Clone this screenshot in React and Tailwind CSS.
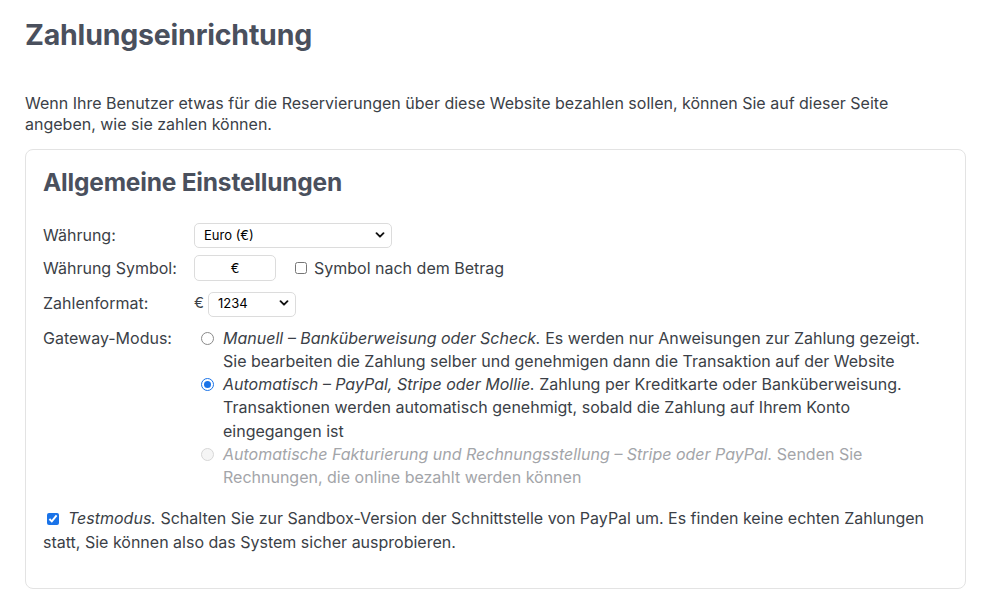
import React, { useState } from "react";

const Chevron = () => (
  <svg
    className="pointer-events-none absolute right-[7px] top-1/2 -translate-y-1/2"
    width="10"
    height="10"
    viewBox="0 0 10 10"
  >
    <path d="M1.5 3.2 L5 6.7 L8.5 3.2" fill="none" stroke="#111" strokeWidth="1.9" strokeLinecap="round" strokeLinejoin="round" />
  </svg>
);

const Radio = ({ checked, disabled }) => (
  <span
    className={
      "mt-[5px] flex h-[13px] w-[13px] shrink-0 items-center justify-center rounded-full border " +
      (checked
        ? "border-[#1a73e8] bg-white"
        : disabled
        ? "border-[#d7d7d7] bg-[#f5f5f5]"
        : "border-[#8a8a8a] bg-white")
    }
  >
    {checked && <span className="h-[7px] w-[7px] rounded-full bg-[#1a73e8]" />}
  </span>
);

const App = () => {
  const [currency, setCurrency] = useState("EUR");
  const [symbol, setSymbol] = useState("€");
  const [format, setFormat] = useState("1234");
  const [mode, setMode] = useState("auto");
  const [testMode, setTestMode] = useState(true);
  const [symbolAfter, setSymbolAfter] = useState(false);

  return (
    <div className="min-h-screen bg-white px-[25px] pt-[17px] font-['Inter','Liberation_Sans',sans-serif] text-[#3b3f47]">
      <h1 className="text-[28.5px] font-bold leading-[36px] tracking-[-0.2px] text-[#4a505d]">Zahlungseinrichtung</h1>

      <p className="mt-[40px] w-[910px] text-[16px] leading-[21px]">
        Wenn Ihre Benutzer etwas für die Reservierungen über diese Website bezahlen sollen, können Sie auf dieser Seite
        angeben, wie sie zahlen können.
      </p>

      <div className="mt-[14px] w-[941px] rounded-[8px] border border-[#e3e3e3] px-[17px] pb-[33px] pt-[16px]">
        <h2 className="text-[24.5px] font-bold leading-[32px] tracking-[-0.2px] text-[#4a505d]">Allgemeine Einstellungen</h2>

        <div className="mt-[24px] grid grid-cols-[151px_1fr] text-[16px]">
          <label className="self-center leading-[24px]">Währung:</label>
          <div className="relative w-[198px]">
            <select
              value={currency}
              onChange={(e) => setCurrency(e.target.value)}
              className="h-[25px] w-full appearance-none rounded-[5px] border border-[#dcdcdc] bg-white pl-[9px] text-[13px] text-black outline-none"
            >
              <option value="EUR">Euro (€)</option>
              <option value="USD">US-Dollar ($)</option>
              <option value="GBP">Pfund (£)</option>
            </select>
            <Chevron />
          </div>

          <label className="mt-[7px] self-center leading-[24px]">Währung Symbol:</label>
          <div className="mt-[7px] flex items-center">
            <input
              value={symbol}
              onChange={(e) => setSymbol(e.target.value)}
              className="h-[26px] w-[82px] rounded-[5px] border border-[#dcdcdc] text-center text-[13px] text-black outline-none"
            />
            <label className="ml-[19px] flex items-center gap-[7px]">
              <input
                type="checkbox"
                checked={symbolAfter}
                onChange={(e) => setSymbolAfter(e.target.checked)}
                className="h-[12px] w-[12px] accent-[#1a73e8]"
              />
              <span>Symbol nach dem Betrag</span>
            </label>
          </div>

          <label className="mt-[9px] self-center leading-[24px]">Zahlenformat:</label>
          <div className="mt-[9px] flex items-center gap-[4px]">
            <span className="text-[15px]">€</span>
            <div className="relative w-[88px]">
              <select
                value={format}
                onChange={(e) => setFormat(e.target.value)}
                className="h-[25px] w-full appearance-none rounded-[5px] border border-[#dcdcdc] bg-white pl-[9px] text-[13px] text-black outline-none"
              >
                <option value="1234">1234</option>
                <option value="1,234">1,234</option>
                <option value="1.234">1.234</option>
              </select>
              <Chevron />
            </div>
          </div>

          <span className="mt-[10px] leading-[23.3px]">Gateway-Modus:</span>
          <div className="mt-[10px] flex flex-col leading-[23.3px]">
            <div className="flex gap-[9px] pl-[7px]" onClick={() => setMode("manual")}>
              <Radio checked={mode === "manual"} />
              <span className="max-w-[712px]">
                <em>Manuell – Banküberweisung oder Scheck.</em> Es werden nur Anweisungen zur Zahlung gezeigt. Sie
                bearbeiten die Zahlung selber und genehmigen dann die Transaktion auf der Website
              </span>
            </div>
            <div className="flex gap-[9px] pl-[7px]" onClick={() => setMode("auto")}>
              <Radio checked={mode === "auto"} />
              <span className="max-w-[712px]">
                <em>Automatisch – PayPal, Stripe oder Mollie.</em> Zahlung per Kreditkarte oder Banküberweisung.
                Transaktionen werden automatisch genehmigt, sobald die Zahlung auf Ihrem Konto eingegangen ist
              </span>
            </div>
            <div className="flex gap-[9px] pl-[7px] text-[#a3a5a9]">
              <Radio checked={false} disabled />
              <span className="max-w-[712px]">
                <em>Automatische Fakturierung und Rechnungsstellung – Stripe oder PayPal.</em> Senden Sie
                Rechnungen, die online bezahlt werden können
              </span>
            </div>
          </div>
        </div>

        <div className="mt-[16px] text-[16px] leading-[24.5px]">
          <input
            type="checkbox"
            checked={testMode}
            onChange={(e) => setTestMode(e.target.checked)}
            className="ml-[4px] mr-[9px] h-[12px] w-[12px] align-[-1px] accent-[#1a73e8]"
          />
          <em>Testmodus.</em> Schalten Sie zur Sandbox-Version der Schnittstelle von PayPal um. Es finden keine echten
          Zahlungen statt, Sie können also das System sicher ausprobieren.
        </div>
      </div>
    </div>
  );
};

export default App;
